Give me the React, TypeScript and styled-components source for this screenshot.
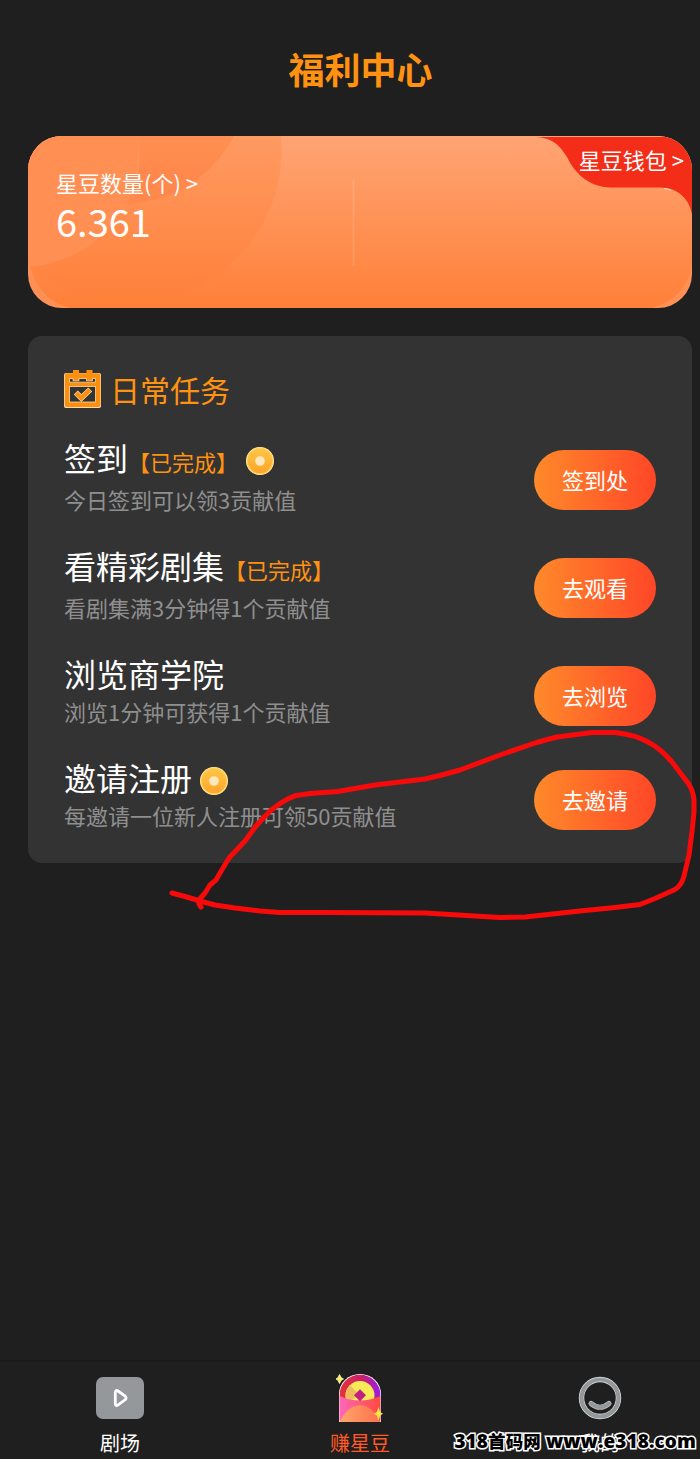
import React from "react";
import styled, { createGlobalStyle } from "styled-components";

const Global = createGlobalStyle`
  * { box-sizing: border-box; }
  body {
    margin: 0;
    background: #1f1f1f;
    font-family: "Noto Sans CJK SC", "Noto Sans", sans-serif;
    color: #fff;
  }
`;

const Page = styled.div`
  position: relative;
  width: 700px;
  height: 1459px;
  display: flex;
  flex-direction: column;
  overflow: hidden;
  background: #1f1f1f;
`;

const Title = styled.h1`
  margin: 0 0 0 21px;
  height: 136px;
  line-height: 136px;
  text-align: center;
  font-size: 36px;
  font-weight: 700;
  color: #ff9210;
`;

const Wallet = styled.section`
  position: relative;
  width: 664px;
  height: 172px;
  flex: none;
  margin-left: 28px;
  border-radius: 34px;
  overflow: hidden;
  isolation: isolate;
  display: flex;
  justify-content: space-between;
  padding: 0 8px 0 28px;
`;

const WalletArt = styled.svg`
  position: absolute;
  inset: 0;
  z-index: -1;
`;

const Balance = styled.div`
  padding-top: 31px;
`;

const BalanceLabel = styled.div`
  font-size: 22px;
  line-height: 30px;
`;

const BalanceValue = styled.div`
  font-size: 38px;
  line-height: 48px;
`;

const WalletLink = styled.a`
  padding-top: 6px;
  font-size: 22px;
  line-height: 34px;
`;

const Tasks = styled.section`
  width: 664px;
  height: 527px;
  flex: none;
  margin: 28px 0 0 28px;
  padding: 34px 36px 0;
  border-radius: 14px;
  background: #333;
`;

const TasksHeader = styled.header`
  display: flex;
  align-items: center;
  gap: 9px;
  height: 38px;
  margin-bottom: 27px;
  font-size: 30px;
  color: #ff9210;
`;

const TaskList = styled.div`
  display: flex;
  flex-direction: column;
  gap: 29px;
`;

const TaskRow = styled.div`
  display: flex;
  justify-content: space-between;
  align-items: flex-start;
`;

const TaskName = styled.div`
  display: flex;
  align-items: baseline;
  height: 44px;
  line-height: 44px;
  font-size: 32px;
  white-space: nowrap;
`;

const Done = styled.span`
  font-size: 22px;
  color: #ff9210;
`;

const Coin = styled.svg`
  align-self: center;
  margin: 8px 0 0 8px;
`;

const TaskDesc = styled.div<{ $gap: number }>`
  margin-top: ${(p) => p.$gap}px;
  height: 30px;
  line-height: 30px;
  font-size: 22px;
  color: #8f8f8f;
`;

const Action = styled.button`
  width: 122px;
  height: 60px;
  margin: 15px 0 -10px;
  padding: 0 0 2px;
  border: 0;
  border-radius: 30px;
  background: linear-gradient(90deg, #ff8a2a, #ff4628);
  color: #fff;
  font: 400 22px/58px "Noto Sans CJK SC", sans-serif;
`;

const TabBar = styled.nav`
  display: flex;
  height: 99px;
  margin-top: auto;
  border-top: 2px solid #1a1a1a;
`;

const Tab = styled.a<{ $active?: boolean }>`
  width: 240px;
  flex: none;
  display: flex;
  flex-direction: column;
  align-items: center;
  padding-top: 10px;
  font-size: 20px;
  line-height: 30px;
  color: ${(p) => (p.$active ? "#ff5a26" : "#fff")};
  svg {
    margin-bottom: 6px;
    flex: none;
  }
`;

const Scribble = styled.svg`
  position: absolute;
  left: 0;
  top: 0;
  pointer-events: none;
`;

const Watermark = styled.div`
  position: absolute;
  right: 4px;
  bottom: 4px;
  font: 800 18.9px/28px "Open Sans", "Noto Sans CJK SC", sans-serif;
  letter-spacing: 0.13px;
  color: #000;
  white-space: nowrap;
  -webkit-text-stroke: 3px #fff;
  paint-order: stroke fill;
`;

const WatermarkName = styled.span`
  font-size: 17.5px;
  font-weight: 900;
`;

const tasks = [
  { name: "签到", done: true, coin: true, desc: "今日签到可以领3贡献值", gap: 5, action: "签到处" },
  { name: "看精彩剧集", done: true, coin: false, desc: "看剧集满3分钟得1个贡献值", gap: 5, action: "去观看" },
  { name: "浏览商学院", done: false, coin: false, desc: "浏览1分钟可获得1个贡献值", gap: 1, action: "去浏览" },
  { name: "邀请注册", done: false, coin: true, desc: "每邀请一位新人注册可领50贡献值", gap: 1, action: "去邀请" },
];

const CoinIcon = () => (
  <Coin width="28" height="28" viewBox="0 0 28 28">
    <defs>
      <linearGradient id="coin" x1="0" y1="0" x2="0" y2="1">
        <stop offset="0" stopColor="#ffc648" />
        <stop offset="1" stopColor="#ffa62a" />
      </linearGradient>
    </defs>
    <circle cx="14" cy="14" r="14" fill="#fff0b8" />
    <circle cx="14" cy="14" r="13.4" fill="#ffcf55" />
    <circle cx="14" cy="14" r="12.2" fill="url(#coin)" />
    <circle cx="14" cy="14" r="4.8" fill="#fde8bd" />
  </Coin>
);

const CalendarIcon = () => (
  <svg width="37" height="38" viewBox="0 0 37 38">
    <path d="M0 5Q0 3 2 3H35Q37 3 37 5V36Q37 38 35 38H2Q0 38 0 36Z" fill="#ffe0b0" />
    <path
      fill="#fb9010"
      d="M.8 5.5Q.8 3.2 3 3.2H9V0H15V3.2H22.5V0H28.5V3.2H34Q36.4 3.2 36.4 5.5V35Q36.4 37 34.4 37H3Q.8 37 .8 35Z"
    />
    <path d="M5.5 8.5H9V10.8H15V8.5H22.5V10.8H28.5V8.5H31.5V12.2H5.5Z" fill="#333" stroke="#ffd8a0" strokeWidth=".8" />
    <rect x="5.5" y="16.5" width="26" height="15.5" fill="#333" stroke="#ffd8a0" strokeWidth=".8" />
    <path d="M11.8 22.6L17.3 28L26.2 19.4" fill="none" stroke="#ffd8a0" strokeWidth="5.6" />
    <path d="M12.2 23L17.3 28L25.8 19.8" fill="none" stroke="#fb9010" strokeWidth="4.4" />
  </svg>
);

const PlayIcon = () => (
  <svg width="48" height="50" viewBox="0 0 48 50">
    <rect y="5" width="48" height="42" rx="7" fill="#94989a" />
    <path
      d="M19.3 20.5Q19.3 17.5 22 19L29.2 24.2Q31 26 29.2 27.6L22 33Q19.3 34.5 19.3 31.5Z"
      fill="none"
      stroke="#fff"
      strokeWidth="2.8"
      strokeLinejoin="round"
    />
  </svg>
);

const PacketIcon = () => (
  <svg width="50" height="50" viewBox="0 0 50 50">
    <defs>
      <linearGradient id="arch">
        <stop offset="0" stopColor="#e83038" />
        <stop offset=".55" stopColor="#c8206c" />
        <stop offset="1" stopColor="#9b1be8" />
      </linearGradient>
      <linearGradient id="body">
        <stop offset="0" stopColor="#ff66bd" />
        <stop offset="1" stopColor="#ff4b3c" />
      </linearGradient>
      <linearGradient id="hill">
        <stop offset="0" stopColor="#ffa66a" />
        <stop offset="1" stopColor="#ff704e" />
      </linearGradient>
    </defs>
    <path d="M4 50V22A21 20 0 0 1 46 22V50Z" fill="#fff" />
    <path d="M4.7 48V22A20.3 19.2 0 0 1 45.3 22V48Z" fill="url(#arch)" />
    <circle cx="25" cy="23.5" r="14.5" fill="#f8e956" />
    <path d="M25 23.5L15 13A14.5 14.5 0 0 0 12 30Z" fill="#edbd5b" />
    <path d="M4.7 24Q25 33 45.3 24V50H4.7Z" fill="url(#body)" />
    <path d="M25 17.2L31 23.2L25 29.2L19 23.2Z" fill="#c21f86" />
    <path d="M4.7 50Q12 34 25 33Q38 34 45.3 50Z" fill="url(#hill)" />
    <path d="M4.5 2.5L6.3 5.7L8.5 7L6.3 8.3L4.5 11.5L2.9 8.3L1 7L2.9 5.7Z" fill="#f8ed69" stroke="#fff7b0" strokeWidth=".8" />
    <path d="M43.5 35L45.2 40L48 41.7L45.2 43.4L43.5 48.5L41.8 43.4L39 41.7L41.8 40Z" fill="#fbe34a" />
  </svg>
);

const FaceIcon = () => (
  <svg width="44" height="50" viewBox="0 0 44 50">
    <circle cx="22" cy="26" r="18.5" fill="none" stroke="#e4e6e6" strokeWidth="5.4" />
    <circle cx="22" cy="26" r="18.5" fill="none" stroke="#94989a" strokeWidth="4.2" />
    <path d="M13 31.5Q22 39 31 31.5" fill="none" stroke="#c8caca" strokeWidth="5" strokeLinecap="round" />
    <path d="M13 31.5Q22 39 31 31.5" fill="none" stroke="#94989a" strokeWidth="3.8" strokeLinecap="round" />
  </svg>
);

export default function App() {
  return (
    <Page>
      <Global />
      <Title>福利中心</Title>
      <Wallet>
        <WalletArt width="664" height="172" viewBox="0 0 664 172">
          <defs>
            <linearGradient id="base" x1="0" y1="0" x2="0" y2="1">
              <stop offset="0" stopColor="#ffa474" />
              <stop offset="1" stopColor="#ff8038" />
            </linearGradient>
            <linearGradient id="disc" x1="0" y1="0" x2="0" y2="164" gradientUnits="userSpaceOnUse">
              <stop offset="0" stopColor="#ff9a62" />
              <stop offset="1" stopColor="#ff813a" />
            </linearGradient>
            <linearGradient id="petal" x1="0" y1="0" x2="0" y2="68" gradientUnits="userSpaceOnUse">
              <stop offset="0" stopColor="#ff8f52" />
              <stop offset=".6" stopColor="#ff884c" />
              <stop offset="1" stopColor="#ff884c" />
            </linearGradient>
          </defs>
          <rect width="664" height="172" fill="#ff9055" />
          <path d="M0 0H664V130Q657 163 624 172H42Q12 165 2 131L0 128Z" fill="url(#base)" />
          <path d="M253 0A153 153 0 0 1 2 131L0 0Z" fill="url(#disc)" />
          <path d="M0 0H110Q113 35 99 68Q66 124 2 131H0Z" fill="#ff8f52" />
          <path d="M110 0H206Q171 63 99 68Q114 40 111 16Z" fill="url(#petal)" />
          <rect x="324.5" y="44" width="2" height="86" fill="#fff" opacity=".11" />
          <path d="M508 1C527 2 533 12 539 21C547 37 560 51 583 51.5H632Q658 52 664 78V1Z" fill="#f32d18" />
          <path d="M636 52.5Q640 52.5 643 54.5" stroke="#ffe0d4" fill="none" />
        </WalletArt>
        <Balance>
          <BalanceLabel>星豆数量(个) &gt;</BalanceLabel>
          <BalanceValue>6.361</BalanceValue>
        </Balance>
        <WalletLink>星豆钱包 &gt;</WalletLink>
      </Wallet>
      <Tasks>
        <TasksHeader>
          <CalendarIcon />
          日常任务
        </TasksHeader>
        <TaskList>
          {tasks.map((t) => (
            <TaskRow key={t.name}>
              <div>
                <TaskName>
                  {t.name}
                  {t.done && <Done>【已完成】</Done>}
                  {t.coin && <CoinIcon />}
                </TaskName>
                <TaskDesc $gap={t.gap}>{t.desc}</TaskDesc>
              </div>
              <Action>{t.action}</Action>
            </TaskRow>
          ))}
        </TaskList>
      </Tasks>
      <TabBar>
        <Tab><PlayIcon />剧场</Tab>
        <Tab $active><PacketIcon />赚星豆</Tab>
        <Tab><FaceIcon />我的</Tab>
      </TabBar>
      <Scribble width="700" height="1459" viewBox="0 0 700 1459">
        <path
          d="M172 893L185 896.5L200 901L215 905L235 908L260 911L280 912.5H320L425 913L500 917.5L525 917L580 911L615 907.5L640 904.5L655 898.5L675 889.5Q682 885 684 876L689 855L692 832L694 812V800Q693 790 688 783L672 762Q660 748 648 742Q636 735 615 732.5H592L557 737Q545 740 535 743L500 755L460 770L440 775.5L425 779L400 782L375 785L352 789L338 791.5L310 793.5L296 795.5Q288 798 280 803.5L270 811L256 826L245 841L229 858L220 873L216 880L210 885L205 893L199 900V904L201 907"
          fill="none"
          stroke="#f90a0a"
          strokeWidth="5"
          strokeLinecap="round"
          strokeLinejoin="round"
        />
      </Scribble>
      <Watermark>
        318<WatermarkName>首码网</WatermarkName> www.e318.com
      </Watermark>
    </Page>
  );
}
